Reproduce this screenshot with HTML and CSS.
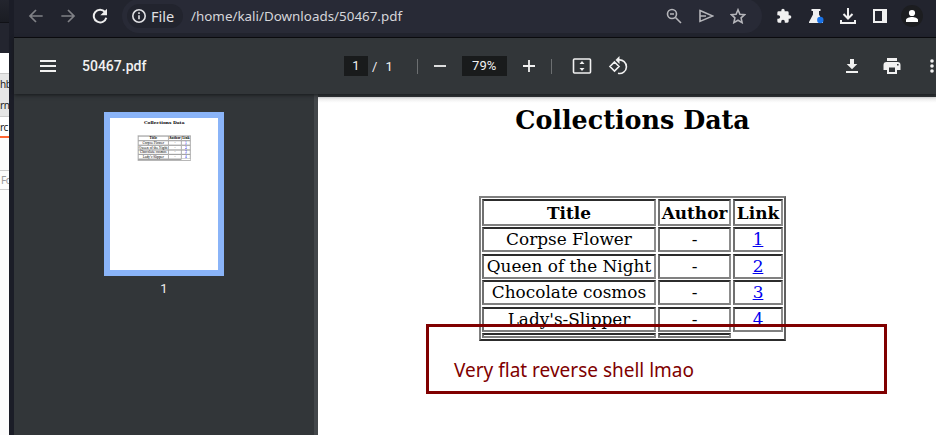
FILE: index.html
```html
<!DOCTYPE html>
<html lang="en">
<head>
<meta charset="utf-8">
<title>50467.pdf</title>
<link rel="stylesheet" href="styles.css">
</head>
<body>
<div class="desktop">
  <aside class="behind">
    <div class="behind-title"></div>
    <div class="behind-bar"></div>
    <div class="behind-gap"></div>
    <div class="behind-tabs"><span>hb</span><span>rn</span></div>
    <div class="behind-active">rc</div>
    <div class="behind-input">Fo</div>
  </aside>
  <main class="window">
    <header class="browser">
      <svg class="nav dim" viewBox="0 0 24 24"><path d="M22 12H3M12 3l-9 9 9 9"/></svg>
      <svg class="nav dim" viewBox="0 0 24 24"><path d="M2 12h19M12 3l9 9-9 9"/></svg>
      <svg class="nav reload" viewBox="0 0 24 24"><path d="M19.500 6A9.500 9.500 0 1 0 21.400 14.500"/><path class="solid" d="M22.500 1v10h-10z"/></svg>
      <div class="omnibox">
        <div class="chip">
          <svg viewBox="0 0 16 16"><circle cx="8" cy="8" r="6.2"/><path d="M8 7.2v4M8 4.3v1.6"/></svg>
          <span>File</span>
        </div>
        <span class="url">/home/kali/Downloads/50467.pdf</span>
        <div class="omni-icons">
          <svg viewBox="0 0 16 16"><circle cx="6" cy="6" r="4.5"/><path d="M9.500 9.500L15 15M4 6h4"/></svg>
          <svg viewBox="0 0 16 16"><path d="M2 2.600L14.800 8 2 13.400zM2 8h6"/></svg>
          <svg viewBox="0 0 16 16"><path d="M8 1.800l1.900 4.400 4.800.5-3.600 3.200 1 4.700L8 12.200l-4.100 2.400 1-4.700-3.600-3.200 4.800-.5z"/></svg>
        </div>
      </div>
      <div class="extensions">
        <svg viewBox="0 0 24 24"><path class="solid" d="M20.500 11H19V7a2 2 0 0 0-2-2h-4V3.500a2.500 2.500 0 0 0-5 0V5H4a2 2 0 0 0-2 2v3.800h1.500a2.700 2.700 0 0 1 0 5.400H2V20a2 2 0 0 0 2 2h3.800v-1.500a2.700 2.700 0 0 1 5.400 0V22H17a2 2 0 0 0 2-2v-4h1.500a2.500 2.500 0 0 0 0-5z"/></svg>
        <svg viewBox="0 0 16 16"><path class="solid" d="M3.500 1h9v2H11v3.500l4 7.500v1H1v-1l4-7.500V3H3.500z"/><circle class="blue" cx="12.300" cy="12" r="3.200"/></svg>
        <svg class="large" viewBox="0 0 18 18"><path d="M9 1v10M4.500 7L9 11.500 13.500 7M2 13v3h14v-3"/></svg>
        <svg viewBox="0 0 16 16"><path d="M2 2h12v12H2z"/><path class="solid" d="M10 2h4v12h-4z"/></svg>
        <div class="avatar"><svg viewBox="0 0 14 14"><circle class="solid" cx="7" cy="4" r="3.100"/><path class="solid" d="M1 13v-2c0-2 3.500-3 6-3s6 1 6 3v2z"/></svg></div>
      </div>
    </header>
    <section class="toolbar">
      <div class="menu"><i></i><i></i><i></i></div>
      <strong class="filename">50467.pdf</strong>
      <div class="controls">
        <span class="field page-no">1</span><span class="slash">/</span><span class="total">1</span>
        <i class="divider"></i>
        <svg class="minus" viewBox="0 0 14 14"><path d="M1 7h12"/></svg>
        <span class="field zoom">79%</span>
        <svg class="plus" viewBox="0 0 14 14"><path d="M1 7h12M7 1v12"/></svg>
        <i class="divider second"></i>
        <svg class="fit" viewBox="0 0 20 16"><rect x="1.500" y="1" width="17" height="14" rx="1"/><path class="solid" d="M10 3l2.500 3h-5zM10 13l2.500-3h-5z"/></svg>
        <svg class="rotate" viewBox="0 0 20 20"><path d="M6.500 6L11 10.500 6.500 15 2 10.500zM10.500 4A6.800 6.800 0 1 1 10 17.300"/><path class="solid" d="M11.500 0v8L7.500 4z"/></svg>
      </div>
      <div class="actions">
        <svg class="save" viewBox="0 0 14 16"><path class="solid" d="M5 1h4v5h3.300L7 11.300 1.700 6H5zM1 13h12v2H1z"/></svg>
        <svg class="print" viewBox="0 0 18 16"><path class="solid" fill-rule="evenodd" d="M4 0h10v3H4zM3.500 4h11A3 3 0 0 1 17.500 7v5H14v4H4v-4H.5V7a3 3 0 0 1 3-3zM6 9.500V14h6V9.500zM14 6v1.600h1.600V6z"/></svg>
        <svg class="more" viewBox="0 0 4 16"><circle class="solid" cx="2" cy="3" r="1.800"/><circle class="solid" cx="2" cy="8" r="1.800"/><circle class="solid" cx="2" cy="13" r="1.800"/></svg>
      </div>
    </section>
    <section class="viewer">
      <nav class="sidebar">
        <div class="thumb">
          <div class="thumb-page">
            <div class="document">
              <h1>Collections Data</h1>
              <div class="table">
                <b>Title</b><b>Author</b><b>Link</b>
                <span>Corpse Flower</span><span>-</span><span><a>1</a></span>
                <span>Queen of the Night</span><span>-</span><span><a>2</a></span>
                <span>Chocolate cosmos</span><span>-</span><span><a>3</a></span>
                <span>Lady's-Slipper</span><span>-</span><span><a>4</a></span>
                <span></span><span></span>
              </div>
            </div>
          </div>
        </div>
        <span class="thumb-no">1</span>
      </nav>
      <div class="splitter"></div>
      <article class="page">
        <div class="document">
          <h1>Collections Data</h1>
          <div class="table">
            <b>Title</b><b>Author</b><b>Link</b>
            <span>Corpse Flower</span><span>-</span><span><a>1</a></span>
            <span>Queen of the Night</span><span>-</span><span><a>2</a></span>
            <span>Chocolate cosmos</span><span>-</span><span><a>3</a></span>
            <span>Lady's-Slipper</span><span>-</span><span><a class="plain">4</a></span>
            <span></span><span></span>
          </div>
        </div>
      </article>
    </section>
  </main>
  <div class="annotation">Very flat reverse shell lmao</div>
</div>
</body>
</html>
```
FILE: styles.css
```css
* { box-sizing: border-box; }
body { margin: 0; font-family: Roboto, "Liberation Sans", sans-serif; background: #323639; }
.desktop { position: relative; display: flex; width: 936px; height: 435px; overflow: hidden; }
svg { display: block; flex: none; width: 16px; height: 16px; fill: none; stroke: currentColor; stroke-width: 1.6; }
svg .solid { fill: currentColor; stroke: none; }
svg .blue { fill: #1a73e8; stroke: none; }

.behind { width: 9px; flex: none; overflow: hidden; background: #fcfcfc; font: 10px/21px "Noto Sans", sans-serif; letter-spacing: -.5px; color: #222; white-space: nowrap; }
.behind-title { height: 23px; background: linear-gradient(#23252e, #1a1c23); border-bottom: 1px solid #101116; }
.behind-bar { height: 30px; background: #23252f; }
.behind-gap { height: 21px; background: #fff; border-bottom: 1px solid #c8c8c8; }
.behind-tabs { display: flex; flex-direction: column; height: 43px; background: #e6e6e6; border-bottom: 1px solid #ccc; }
.behind-active { height: 21px; background: #fff; border-bottom: 2px solid #ff6633; }
.behind-input { height: 20px; margin-top: 32px; padding-left: 1px; border: solid #ccc; border-width: 1px 0; line-height: 18px; color: #999; }

.window { flex: 1; min-width: 0; display: flex; flex-direction: column; border-left: 5px solid #1b1d27; box-shadow: inset 1px 0 #0d0e13; }
.browser { display: flex; align-items: center; height: 38px; padding: 0 0 5px 14px; background: #22242e; border-bottom: 1px solid #07080b; color: #eee; flex: none; }
.nav { width: 16px; height: 16px; margin-right: 16px; stroke-width: 2.6; }
.dim { color: #808186; }
.reload { margin-right: 14px; stroke-width: 3; }
.omnibox { display: flex; align-items: center; width: 640px; height: 34px; padding-left: 5px; border-radius: 17px; background: #282a36; font-family: "Noto Sans", sans-serif; font-size: 13.400px; }
.chip { display: flex; align-items: center; gap: 4px; width: 56px; height: 24px; padding-left: 4px; border-radius: 12px; background: #22242e; color: #e0e0e3; font-size: 14.500px; }
.url { margin-left: 8px; color: #d6d6da; }
.omni-icons { display: flex; gap: 16px; margin-left: auto; margin-right: 16px; color: #b5b5ba; }
.extensions { display: flex; align-items: center; gap: 16px; margin-left: 14px; color: #f0f0f0; }
.extensions > svg { stroke-width: 2; }
.extensions .large { width: 18px; height: 18px; margin: 0 -1px; }
.avatar { display: grid; place-items: center; width: 22px; height: 22px; margin-left: -3px; border-radius: 50%; background: #1c1d20; color: #fff; }
.avatar svg { width: 14px; height: 14px; }

.toolbar { display: flex; align-items: center; position: relative; height: 56px; flex: none; padding-left: 26px; background: #323639; color: #f1f1f1; box-shadow: 0 1px 4px #15181a; }
.menu { display: flex; flex-direction: column; gap: 3px; width: 16px; }
.menu i { height: 2px; background: #f1f1f1; }
.filename { width: 262px; margin-left: 26px; font-size: 14px; font-weight: 500; }
.controls { display: flex; align-items: center; font-size: 13px; }
.field { height: 20px; line-height: 20px; text-align: center; background: #191b1c; }
.page-no { width: 24px; }
.slash { margin-left: 4px; }
.total { margin-left: 8px; }
.divider { width: 1px; height: 15px; margin-left: 24px; background: #6c6f71; }
.minus, .plus { width: 14px; height: 14px; margin-left: 15px; stroke-width: 1.800; }
.zoom { width: 45px; margin-left: 15px; }
.second { margin-left: 15px; }
.fit { width: 20px; margin-left: 20px; }
.rotate { width: 20px; height: 20px; margin-left: 16px; }
.actions { display: flex; align-items: center; margin-left: auto; }
.save { width: 14px; }
.print { width: 18px; margin-left: 24px; }
.more { width: 4px; margin: 0 2px 0 29px; }

.viewer { display: flex; flex: 1; min-height: 0; background: #323639; }
.sidebar { display: flex; flex-direction: column; align-items: center; width: 300px; flex: none; padding-top: 18px; }
.thumb { width: 120px; height: 164px; border: 6px solid #8ab4f8; flex: none; }
.thumb-page { height: 152px; background: #fff; overflow: hidden; }
.thumb-no { margin-top: 5px; font-size: 13px; color: #eee; }
.splitter { width: 4px; flex: none; background: #43474a; }
.page { flex: 1; min-width: 0; margin-top: 3px; background: linear-gradient(#e9e9e9, #fff 6px); }
.document { width: 629px; padding-top: 8px; font-family: "DejaVu Serif", serif; font-size: 16.900px; color: #000; }
.thumb-page .document { transform: scale(.1725); transform-origin: 0 0; padding-top: 10px; }
.document h1 { margin: 0 0 61px; text-align: center; font-size: 25.400px; line-height: 30px; }
.table { display: grid; grid-template-columns: 174px 73px 50px; grid-template-rows: 27px repeat(4, 25px) 5px; gap: 1.400px 2px; width: 307px; height: 145px; margin-left: 161px; padding: 1px; border: 2px solid; border-color: #808080 #606060 #2c2c2c #808080; }
.table b, .table span { display: flex; align-items: center; justify-content: center; min-width: 0; min-height: 0; line-height: 20px; white-space: nowrap; border: 2px solid; border-color: #2c2c2c #8c8c8c #808080 #707070; }
.table span { padding-bottom: 1px; }
.table a { color: #0000ee; text-decoration: underline; }
.table .plain { text-decoration: none; }

.annotation { position: absolute; left: 426px; top: 324px; width: 461px; height: 70px; padding-left: 25px; border: 3px solid #800000; font: 19px/86px "Noto Sans", sans-serif; color: #800000; }
```
